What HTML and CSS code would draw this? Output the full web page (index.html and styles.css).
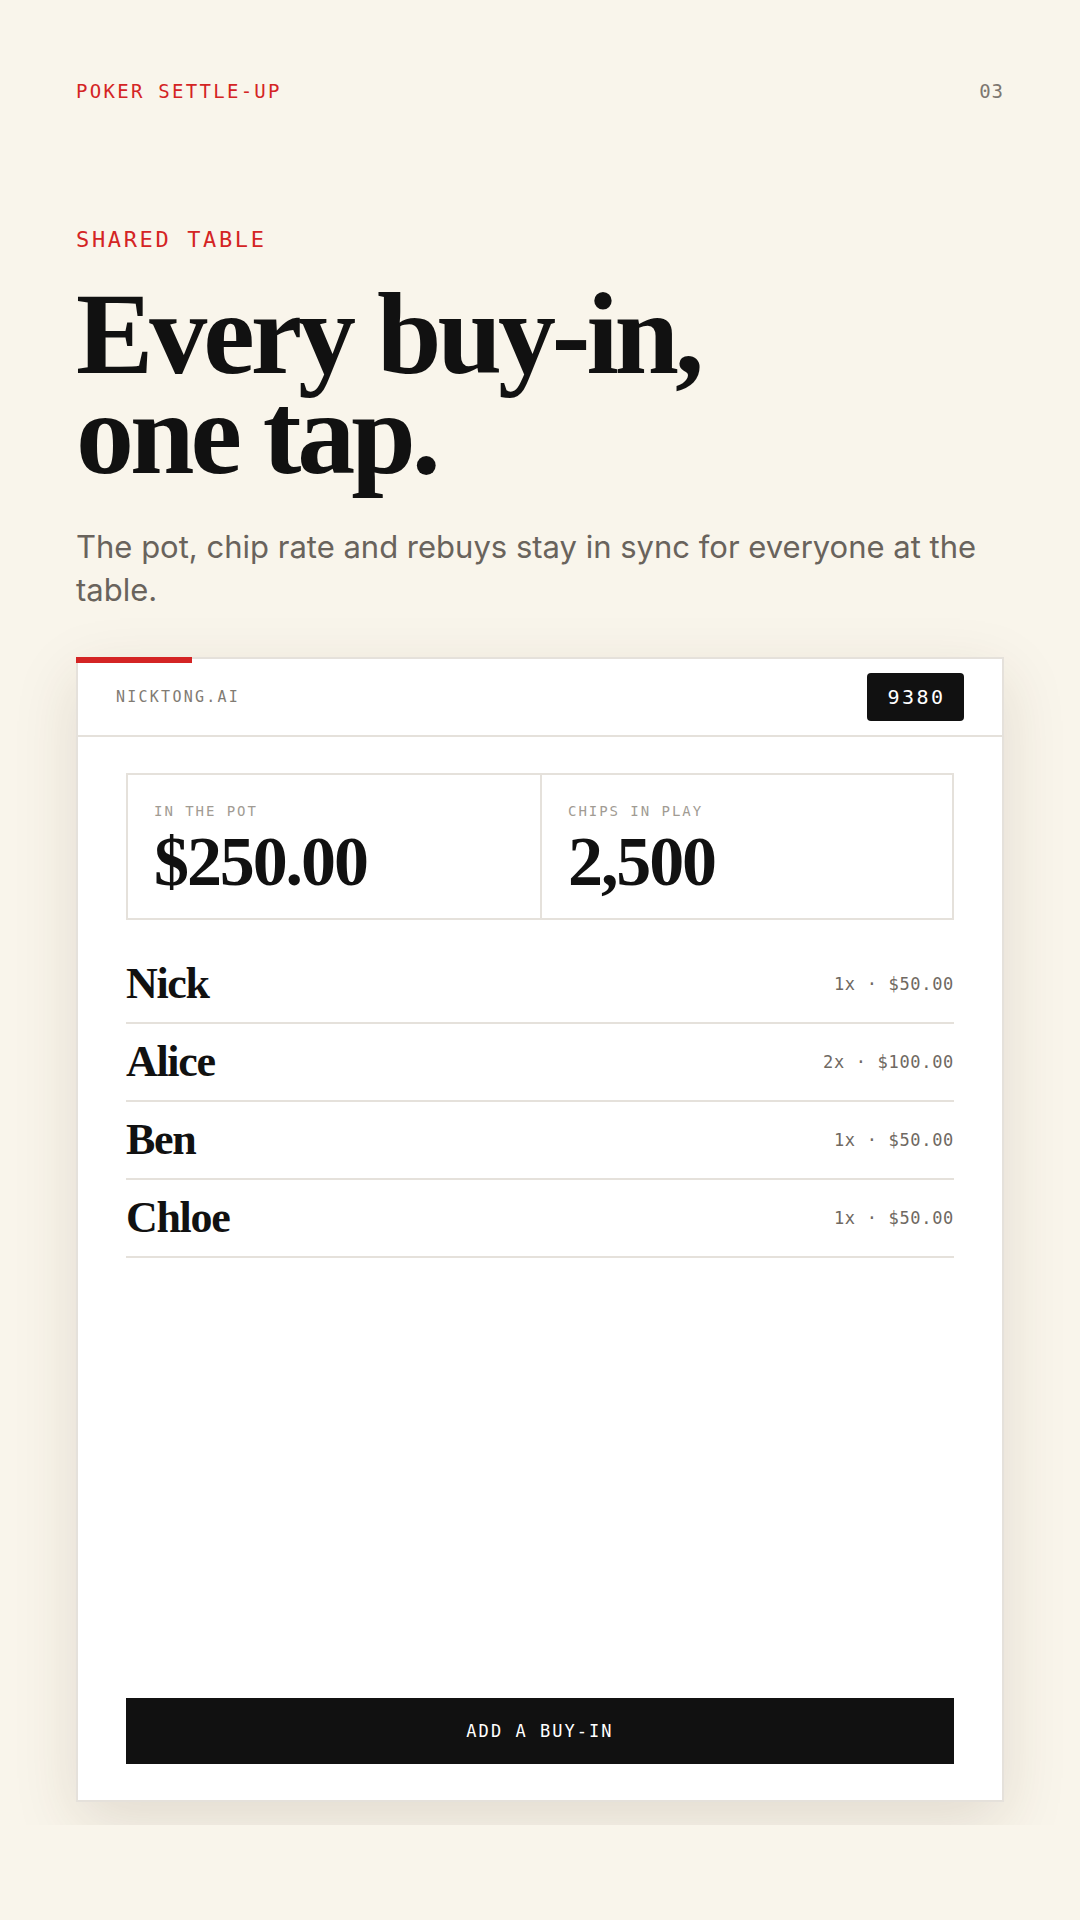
FILE: index.html
```html
<!DOCTYPE html>
<html lang="en">

<head>
    <meta charset="UTF-8">
    <meta name="viewport" content="width=device-width, initial-scale=1.0">
    <title>Poker Settle-Up</title>
    <link rel="stylesheet" href="styles.css">
</head>

<body>
    <div class="screen">
        <div class="topbar">
            <span class="brand">Poker Settle-Up</span>
            <span class="page-num">03</span>
        </div>

        <div class="eyebrow">Shared Table</div>
        <h1>Every buy-in,<br>one tap.</h1>
        <p class="lede">The pot, chip rate and rebuys stay in sync for everyone at the table.</p>

        <div class="card">
            <div class="card-accent"></div>
            <div class="card-header">
                <span class="host">nicktong.ai</span>
                <span class="code">9380</span>
            </div>

            <div class="card-body">
                <div class="stats">
                    <div class="stat">
                        <div class="stat-label">In the pot</div>
                        <div class="stat-value">$250.00</div>
                    </div>
                    <div class="stat">
                        <div class="stat-label">Chips in play</div>
                        <div class="stat-value">2,500</div>
                    </div>
                </div>

                <ul class="players">
                    <li class="player">
                        <span class="player-name">Nick</span>
                        <span class="player-meta">1x · $50.00</span>
                    </li>
                    <li class="player">
                        <span class="player-name">Alice</span>
                        <span class="player-meta">2x · $100.00</span>
                    </li>
                    <li class="player">
                        <span class="player-name">Ben</span>
                        <span class="player-meta">1x · $50.00</span>
                    </li>
                    <li class="player">
                        <span class="player-name">Chloe</span>
                        <span class="player-meta">1x · $50.00</span>
                    </li>
                </ul>

                <button class="buy-in">Add a buy-in</button>
            </div>
        </div>
    </div>
</body>

</html>
```

FILE: styles.css
```css
body {
    margin: 0;
    background-color: #f9f5eb;
    color: #111;
}

.screen {
    height: 1825px;
    box-sizing: border-box;
    padding: 0 76px;
    display: flex;
    flex-direction: column;
    overflow: hidden;
}

.topbar {
    display: flex;
    justify-content: space-between;
    padding-top: 79px;
    font-family: "DejaVu Sans Mono", monospace;
    font-size: 19px;
    line-height: 24px;
    letter-spacing: 0.12em;
    text-transform: uppercase;
}

.brand {
    color: #d42424;
}

.page-num {
    color: #7d7770;
    letter-spacing: 0.05em;
}

.eyebrow {
    margin-top: 123px;
    font-family: "DejaVu Sans Mono", monospace;
    font-size: 22px;
    line-height: 28px;
    letter-spacing: 0.12em;
    text-transform: uppercase;
    color: #d42424;
}

h1 {
    margin: 30px 0 0;
    font-family: "Liberation Serif", serif;
    font-weight: 700;
    font-size: 116px;
    line-height: 100px;
    letter-spacing: -0.035em;
}

.lede {
    margin: 41px 0 0;
    font-family: "Inter", sans-serif;
    font-size: 31px;
    line-height: 43px;
    color: #69635c;
}

.card {
    position: relative;
    flex: 1;
    margin: 46px 0 23px;
    display: flex;
    flex-direction: column;
    background-color: #fff;
    border: 2px solid #e5e1db;
    box-shadow: 0 20px 60px rgba(70, 50, 20, 0.13);
}

.card-accent {
    position: absolute;
    top: -2px;
    left: -2px;
    width: 116px;
    height: 6px;
    background-color: #d42424;
}

.card-header {
    display: flex;
    justify-content: space-between;
    align-items: center;
    height: 76px;
    padding: 0 38px;
    border-bottom: 2px solid #e5e1db;
}

.host {
    font-family: "DejaVu Sans Mono", monospace;
    font-size: 15px;
    letter-spacing: 0.15em;
    text-transform: uppercase;
    color: #817b73;
}

.code {
    width: 97px;
    height: 48px;
    display: flex;
    align-items: center;
    justify-content: center;
    box-sizing: border-box;
    padding-left: 2px;
    background-color: #111;
    border-radius: 4px;
    color: #fff;
    font-family: "DejaVu Sans Mono", monospace;
    font-size: 20px;
    letter-spacing: 0.12em;
}

.card-body {
    flex: 1;
    display: flex;
    flex-direction: column;
    padding: 36px 48px 36px;
}

.stats {
    display: grid;
    grid-template-columns: 1fr 1fr;
    border: 2px solid #e5e1db;
}

.stat {
    padding: 27px 26px 21px;
}

.stat + .stat {
    border-left: 2px solid #e5e1db;
}

.stat-label {
    font-family: "DejaVu Sans Mono", monospace;
    font-size: 14px;
    line-height: 18px;
    letter-spacing: 0.14em;
    text-transform: uppercase;
    color: #a19b93;
}

.stat-value {
    margin-top: 7px;
    font-family: "Liberation Serif", serif;
    font-weight: 700;
    font-size: 70px;
    line-height: 70px;
    letter-spacing: -0.03em;
}

.players {
    list-style: none;
    margin: 26px 0 0;
    padding: 0;
}

.player {
    display: flex;
    justify-content: space-between;
    align-items: center;
    padding: 16px 0;
    border-bottom: 2px solid #e5e1db;
}

.player-name {
    font-family: "Liberation Serif", serif;
    font-weight: 700;
    font-size: 44px;
    line-height: 44px;
    letter-spacing: -0.03em;
}

.player-meta {
    font-family: "DejaVu Sans Mono", monospace;
    font-size: 17px;
    letter-spacing: 0.04em;
    color: #6f6962;
}

.buy-in {
    margin-top: auto;
    height: 66px;
    border: none;
    background-color: #111;
    color: #fff;
    font-family: "DejaVu Sans Mono", monospace;
    font-size: 17px;
    letter-spacing: 0.12em;
    text-transform: uppercase;
    cursor: pointer;
}
```
